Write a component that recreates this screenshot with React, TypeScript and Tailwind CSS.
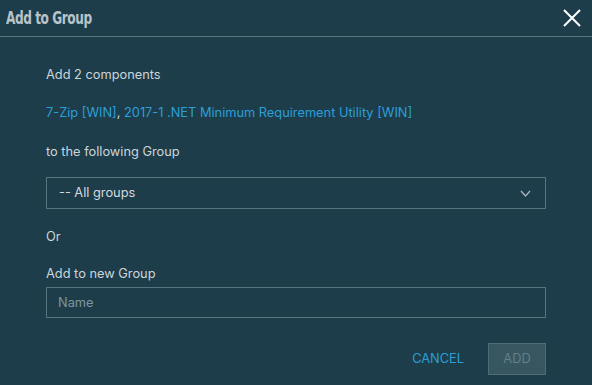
import React from 'react';

const App: React.FC = () => {
  return (
    <div className="w-[592px] h-[385px] bg-[#1d3d4b] flex flex-col font-['Inter',sans-serif] overflow-hidden">
      <div className="h-[37px] flex items-center justify-between pl-[6px] pr-[10px] border-b border-[#56757f]">
        <span className="font-['DejaVu_Sans_Condensed',sans-serif] font-bold text-[18px] tracking-[-0.6px] text-[#b8c4ca] leading-none origin-left scale-x-[0.75] inline-block">
          Add to Group
        </span>
        <svg width="20" height="20" viewBox="0 0 20 20" className="text-white">
          <path d="M2 2 L18 18 M18 2 L2 18" stroke="currentColor" strokeWidth="2" fill="none" />
        </svg>
      </div>

      <div className="flex flex-col px-[46px] pt-[28px] text-[12.8px] text-[#ccd5d9]">
        <div className="h-[20px] leading-[20px]">Add 2 components</div>
        <div className="h-[20px] leading-[20px] mt-[18px] text-[#2c9fd8]">
          7-Zip [WIN]<span className="text-[#ccd5d9]">,</span> 2017-1 .NET Minimum Requirement Utility [WIN]
        </div>
        <div className="h-[20px] leading-[20px] mt-[19px]">to the following Group</div>
        <div className="mt-[15px] h-[32px] border border-[#56757f] flex items-center justify-between pl-[12px] pr-[14px]">
          <span className="text-[#d2dadd]">-- All groups</span>
          <svg width="11" height="7" viewBox="0 0 11 7">
            <path d="M1 1 L5.5 6 L10 1" stroke="#a9b8be" strokeWidth="1.3" fill="none" />
          </svg>
        </div>
        <div className="h-[20px] leading-[20px] mt-[18px]">Or</div>
        <div className="h-[20px] leading-[20px] mt-[17px]">Add to new Group</div>
        <div className="mt-[3px] h-[31px] border border-[#56757f] flex items-center pl-[11px]">
          <span className="text-[#7f959d]">Name</span>
        </div>
        <div className="flex justify-end items-center mt-[25px] gap-[24px]">
          <span className="text-[#2c9fd8]">CANCEL</span>
          <div className="w-[58px] h-[32px] bg-[#385660] border border-[#4f6d77] flex items-center justify-center text-[#60808a]">
            ADD
          </div>
        </div>
      </div>
    </div>
  );
};

export default App;
